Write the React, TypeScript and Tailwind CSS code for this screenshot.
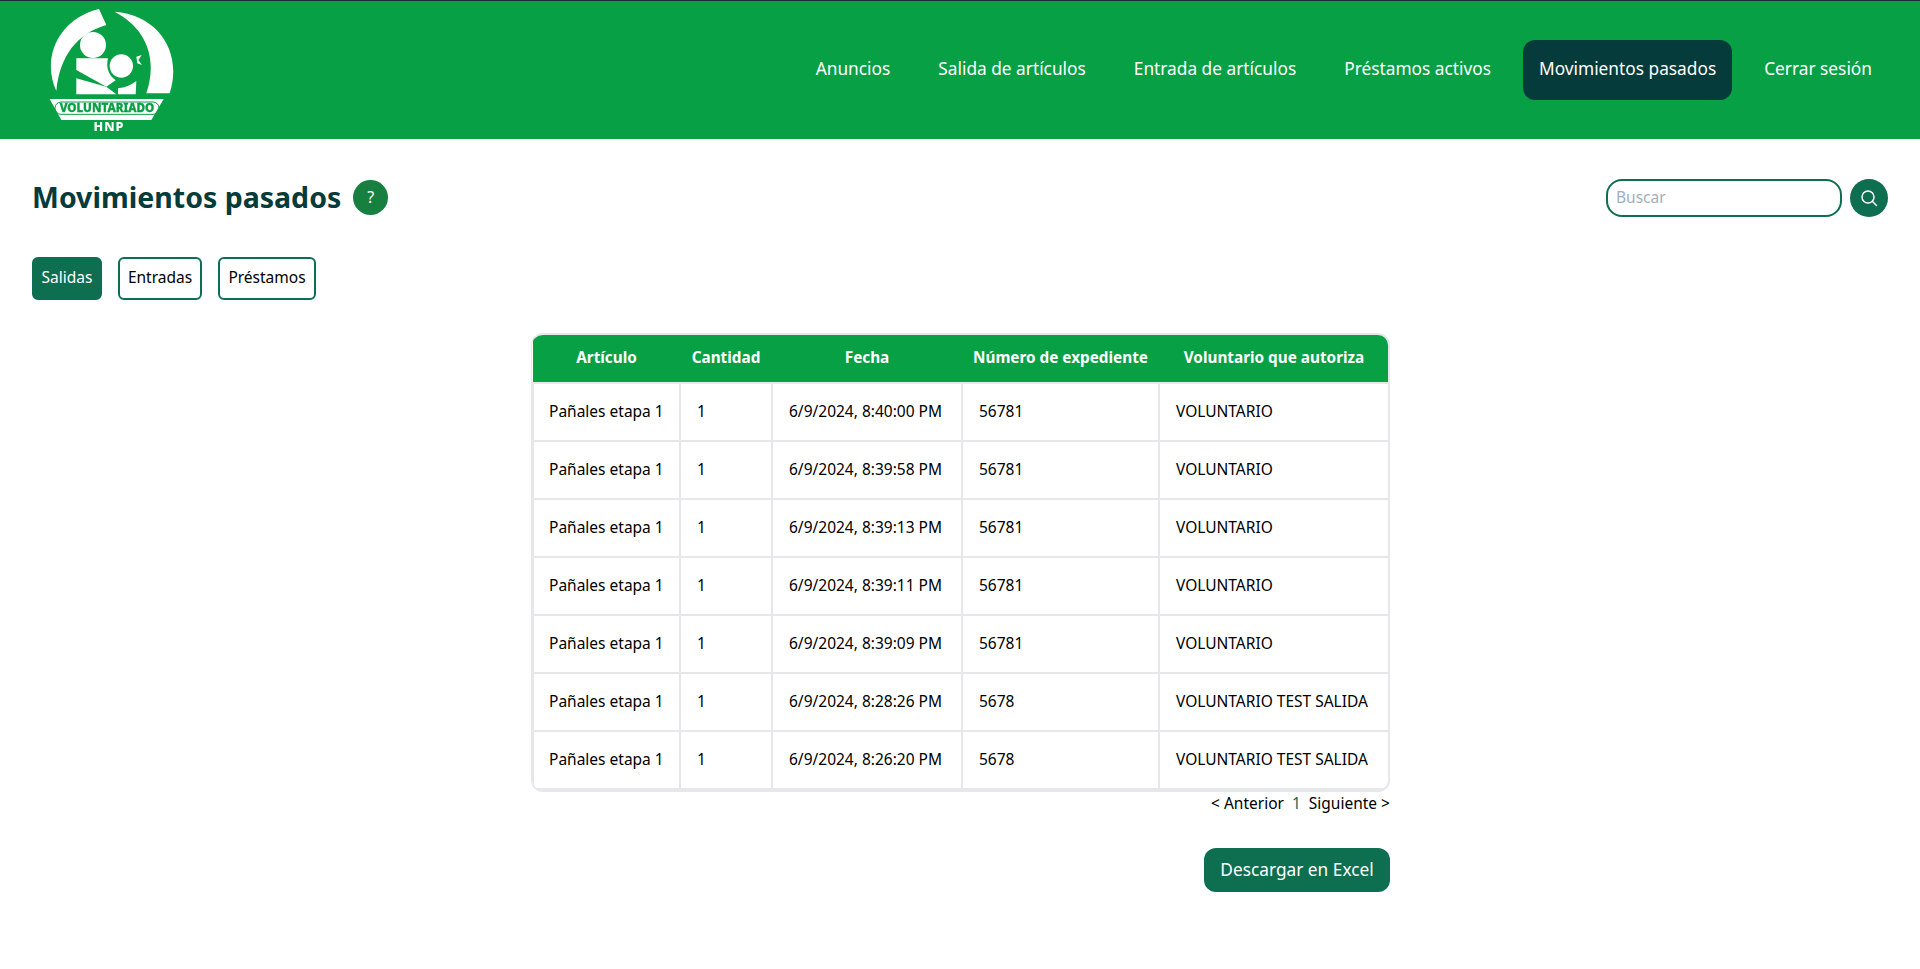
const rows = [
	["Pañales etapa 1", "1", "6/9/2024, 8:40:00 PM", "56781", "VOLUNTARIO"],
	["Pañales etapa 1", "1", "6/9/2024, 8:39:58 PM", "56781", "VOLUNTARIO"],
	["Pañales etapa 1", "1", "6/9/2024, 8:39:13 PM", "56781", "VOLUNTARIO"],
	["Pañales etapa 1", "1", "6/9/2024, 8:39:11 PM", "56781", "VOLUNTARIO"],
	["Pañales etapa 1", "1", "6/9/2024, 8:39:09 PM", "56781", "VOLUNTARIO"],
	["Pañales etapa 1", "1", "6/9/2024, 8:28:26 PM", "5678", "VOLUNTARIO TEST SALIDA"],
	["Pañales etapa 1", "1", "6/9/2024, 8:26:20 PM", "5678", "VOLUNTARIO TEST SALIDA"],
];

const headers = ["Artículo", "Cantidad", "Fecha", "Número de expediente", "Voluntario que autoriza"];
const navItems = ["Anuncios", "Salida de artículos", "Entrada de artículos", "Préstamos activos", "Movimientos pasados", "Cerrar sesión"];
const widths = ["w-[147px]", "w-[92px]", "w-[190px]", "w-[197px]", "w-[230px]"];

const Logo = () => (
	<svg viewBox="0 0 405 396" className="w-[135px] h-[132px] ml-[43px] mt-[4px] shrink-0 blur-[0.6px]" fill="#fff">
		<path d="M40 258C-5 160 45 42 168 12L190 60C105 85 50 150 40 258Z" />
		<path d="M215 20C345 30 420 140 380 265L310 265C345 160 310 70 215 20Z" />
		<circle cx="150" cy="120" r="39" />
		<circle cx="235" cy="183" r="35" />
		<path d="M100 160H195C188 190 198 212 218 226L190 245L100 195Z" />
		<path d="M100 220L190 245L220 268H100Z" />
		<path d="M225 250C245 248 265 240 280 228L278 268H225Z" />
		<path d="M280 155L296 150L286 165L297 180L283 175Z" />
		<path d="M20 282H362L325 345H55Z" />
		<rect x="36" y="291" width="312" height="37" rx="18" fill="none" stroke="#08a045" strokeWidth="3" />
		<text x="192" y="321" textAnchor="middle" fontSize="35" fontWeight="800" fill="#08a045" stroke="#08a045" strokeWidth="1" fontFamily="'Noto Sans', sans-serif">VOLUNTARIADO</text>
		<text x="198" y="377" textAnchor="middle" fontSize="38" fontWeight="800" letterSpacing="3" fontFamily="'Noto Sans', sans-serif">HNP</text>
	</svg>
);

export default function App() {
	return (
		<div className="min-h-[969px] bg-white font-['Noto_Sans',sans-serif] text-black">
			<header className="h-[139px] bg-[#08a045] border-t border-[#1f2937] flex justify-between items-start">
				<Logo />
				<nav className="flex gap-4 pr-8 pt-[39px]">
					{navItems.map((item) => (
						<a
							key={item}
							className={`h-[60px] px-4 pb-[2px] flex items-center text-[17.3px] text-white rounded-xl ${
								item === "Movimientos pasados" ? "bg-[#053b3a]" : ""
							}`}>
							{item}
						</a>
					))}
				</nav>
			</header>

			<main className="px-8">
				<div className="flex justify-between items-center pt-[40px]">
					<div className="flex items-center gap-3 -mt-[2px]">
						<h1 className="text-[28.5px] leading-[36px] font-bold text-[#053b3a]">Movimientos pasados</h1>
						<button className="w-[35px] h-[35px] rounded-full bg-[#178040] text-white text-base flex items-center justify-center">?</button>
					</div>
					<div className="flex items-center gap-2">
						<input
							placeholder="Buscar"
							className="w-[236px] h-[38px] border-2 border-[#0e6e50] rounded-2xl px-2 pb-[2px] text-[15.5px] placeholder:text-[#a0aec0] outline-none"
						/>
						<button className="w-[38px] h-[38px] rounded-full bg-[#0e6e50] text-white flex items-center justify-center">
							<svg width="18" height="18" viewBox="0 0 18 18" fill="none" stroke="currentColor" strokeWidth="1.5" strokeLinecap="round">
								<circle cx="8" cy="8" r="6" />
								<path d="M12.5 12.5L16.5 16.5" />
							</svg>
						</button>
					</div>
				</div>

				<div className="flex gap-4 mt-[40px]">
					<button className="h-[43px] w-[70px] pb-[1px] rounded-md border-2 border-[#0e6e50] bg-[#0e6e50] text-white text-[15.5px]">Salidas</button>
					<button className="h-[43px] w-[84px] pb-[1px] rounded-md border-2 border-[#0e6e50] text-[15.5px]">Entradas</button>
					<button className="h-[43px] w-[98px] pb-[1px] rounded-md border-2 border-[#0e6e50] text-[15.5px]">Préstamos</button>
				</div>

				<div className="w-[859px] ml-[499px] mt-[33px]">
					<div className="border-2 border-l border-[#e5e7eb] rounded-xl overflow-hidden">
						<table className="w-full border-collapse table-fixed text-[15.5px]">
							<thead>
								<tr className="bg-[#08a045] text-white h-[48px]">
									{headers.map((h, i) => (
										<th key={h} className={`${widths[i]} font-bold text-[15.3px] text-center pb-[3px]`}>{h}</th>
									))}
								</tr>
							</thead>
							<tbody>
								{rows.map((row, r) => (
									<tr key={r} className="h-[58px]">
										{row.map((cell, c) => (
											<td key={c} className="px-4 first:pl-[15px] border-2 border-[#e5e7eb] whitespace-nowrap">
												{cell}
											</td>
										))}
									</tr>
								))}
							</tbody>
						</table>
					</div>
					<div className="flex justify-end gap-2 text-[15.5px] mt-[2px] leading-[18px]">
						<span>&lt; Anterior</span>
						<span className="text-[#0e6e50]">1</span>
						<span>Siguiente &gt;</span>
					</div>
					<div className="flex justify-end mt-[36px]">
						<button className="h-[44px] w-[186px] pb-[1px] rounded-xl bg-[#0e6e50] text-white text-[17.3px]">Descargar en Excel</button>
					</div>
				</div>
			</main>
		</div>
	);
}
